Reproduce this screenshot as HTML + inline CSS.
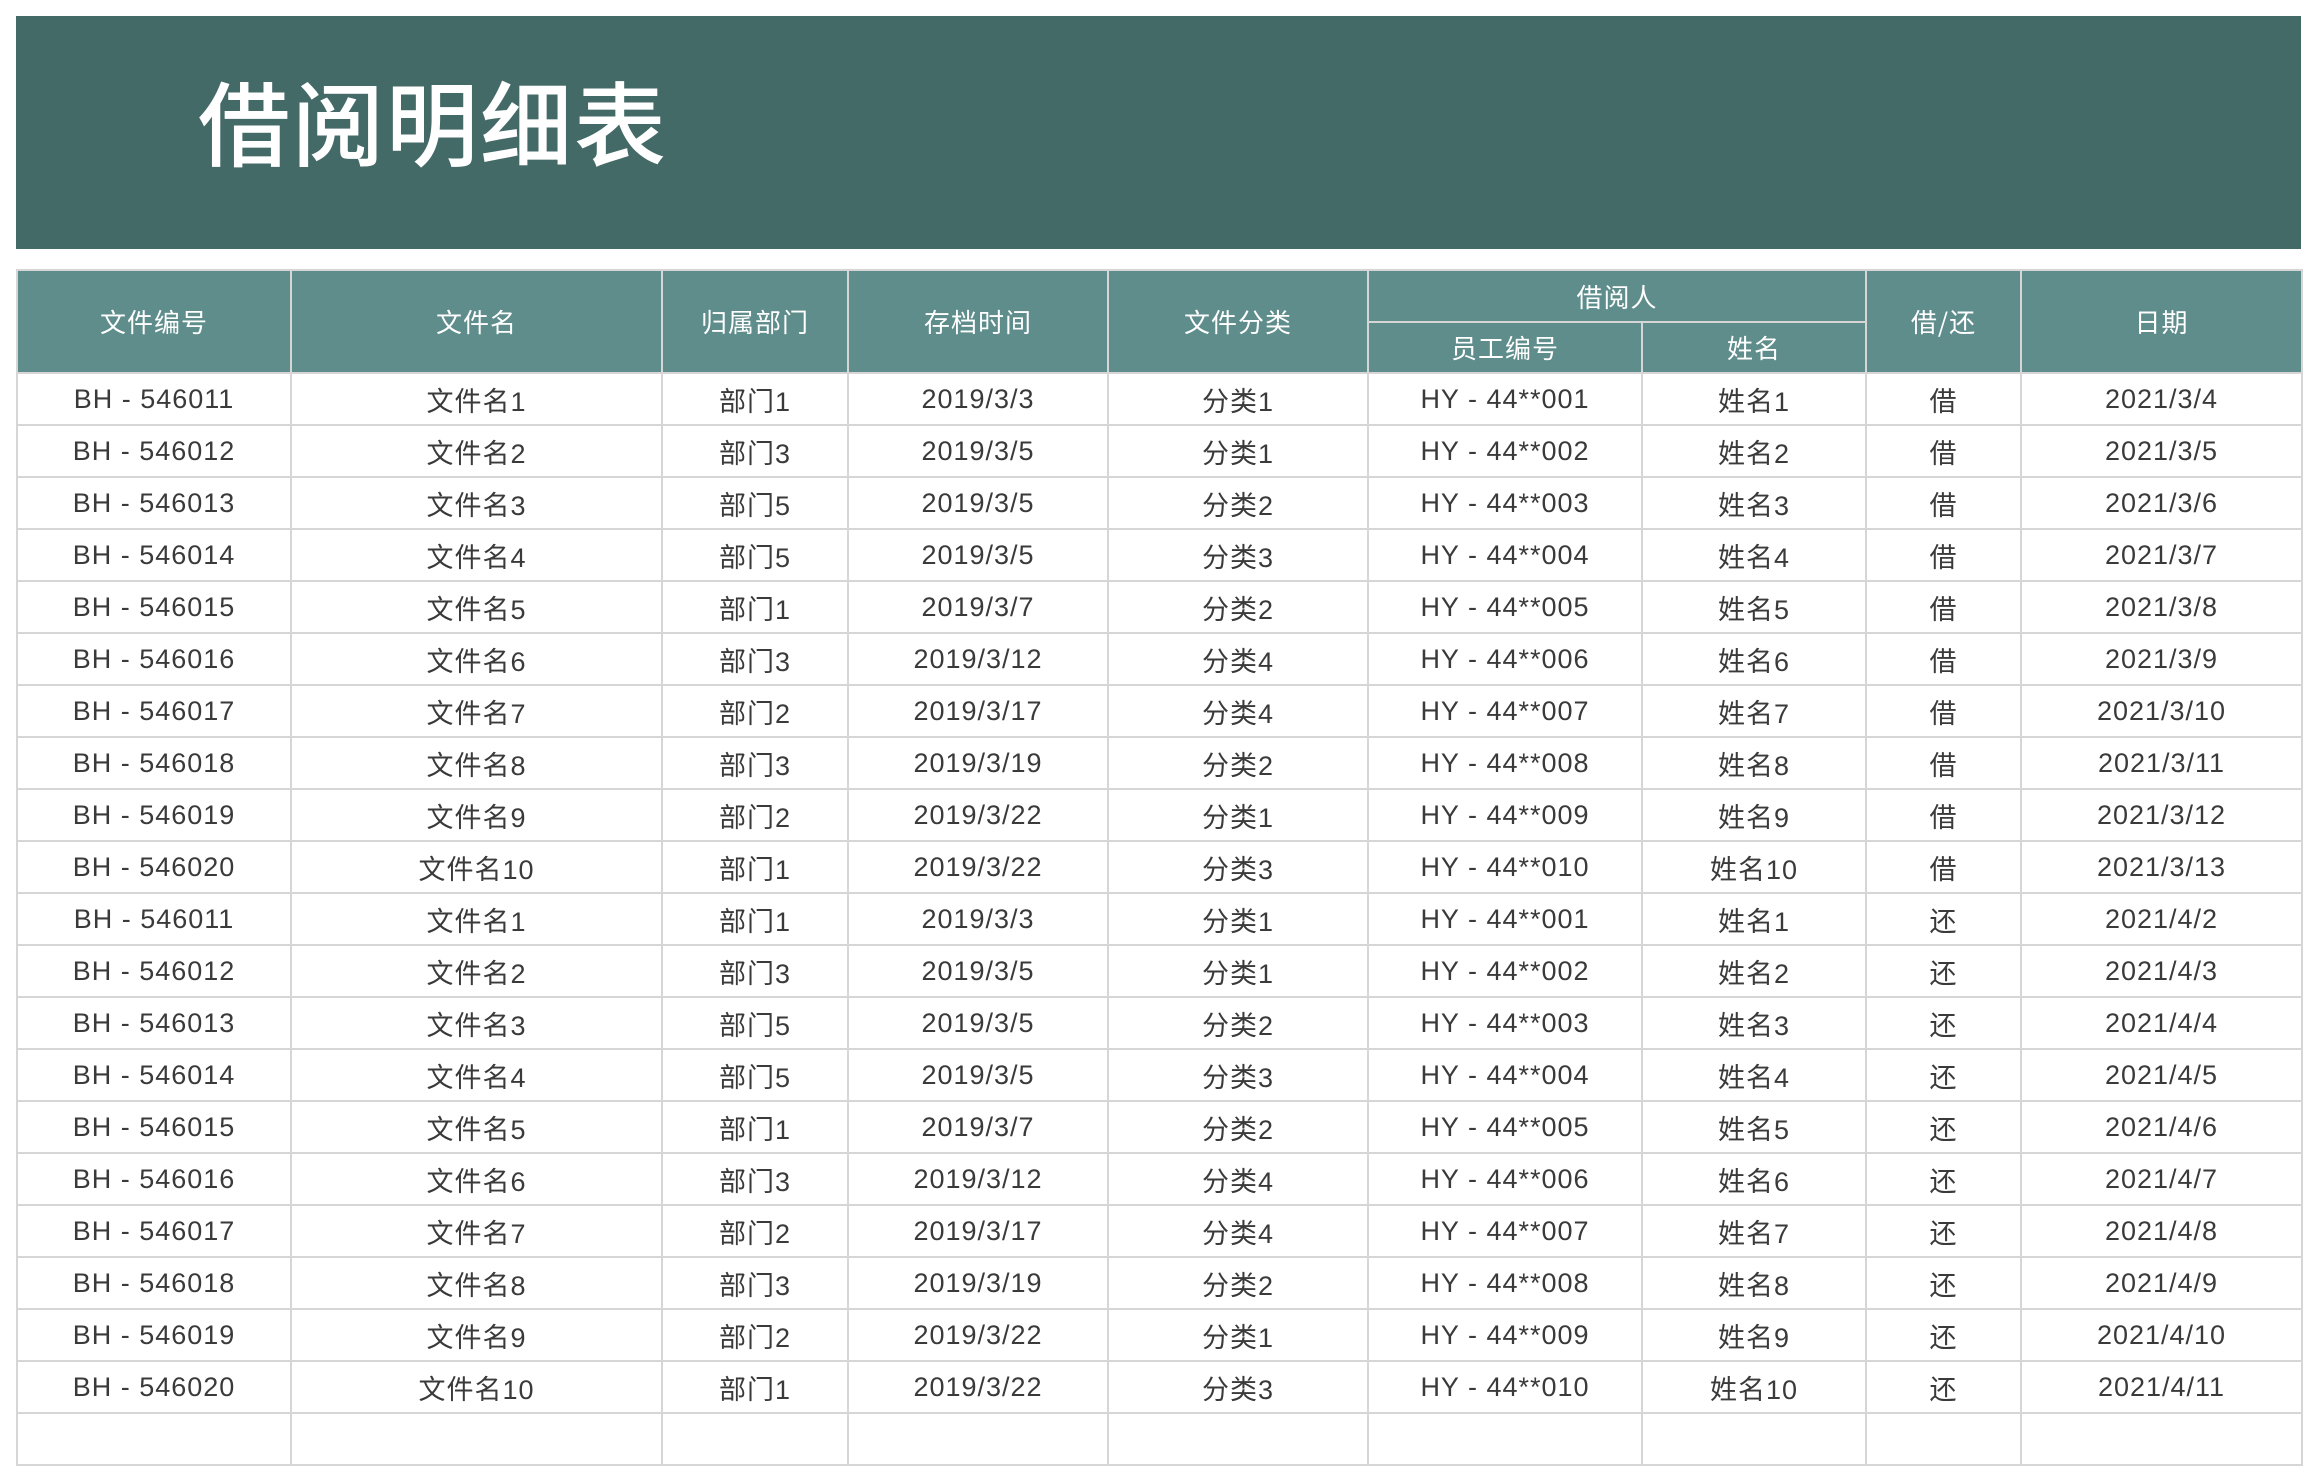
<!DOCTYPE html>
<html><head><meta charset="utf-8"><style>
html,body{margin:0;padding:0;background:#fff;width:2318px;height:1481px;overflow:hidden}
.banner{position:absolute;left:16px;top:16px;width:2285px;height:233px;background:#446a68}
.title{position:absolute;left:198px;top:60px;font-family:"Noto Sans CJK SC",sans-serif;font-size:92px;font-weight:500;color:#fff;line-height:120px;letter-spacing:2px}
table{position:absolute;left:16px;top:269px;border-collapse:collapse;table-layout:fixed;width:2285px;font-family:"Liberation Sans","Noto Sans CJK SC",sans-serif}
td,th{border:2px solid #d6d6d6;text-align:center;padding:0;overflow:hidden;white-space:nowrap}
th{background:#5e8d8b;color:#fff;font-weight:normal;font-size:26px;font-family:"Noto Sans CJK SC",sans-serif;letter-spacing:1px}
td{height:50px;font-size:27px;color:#3a3a3a;letter-spacing:1px}
</style></head><body>
<div class="banner"></div>
<div class="title">借阅明细表</div>
<table>
<colgroup><col style="width:274px"><col style="width:371px"><col style="width:186px"><col style="width:260px"><col style="width:260px"><col style="width:274px"><col style="width:224px"><col style="width:155px"><col style="width:281px"></colgroup>
<tr style="height:52px"><th rowspan="2">文件编号</th><th rowspan="2">文件名</th><th rowspan="2">归属部门</th><th rowspan="2">存档时间</th><th rowspan="2">文件分类</th><th colspan="2">借阅人</th><th rowspan="2">借/还</th><th rowspan="2">日期</th></tr>
<tr style="height:51px"><th>员工编号</th><th>姓名</th></tr>
<tr><td>BH - 546011</td><td>文件名1</td><td>部门1</td><td>2019/3/3</td><td>分类1</td><td>HY - 44**001</td><td>姓名1</td><td>借</td><td>2021/3/4</td></tr>
<tr><td>BH - 546012</td><td>文件名2</td><td>部门3</td><td>2019/3/5</td><td>分类1</td><td>HY - 44**002</td><td>姓名2</td><td>借</td><td>2021/3/5</td></tr>
<tr><td>BH - 546013</td><td>文件名3</td><td>部门5</td><td>2019/3/5</td><td>分类2</td><td>HY - 44**003</td><td>姓名3</td><td>借</td><td>2021/3/6</td></tr>
<tr><td>BH - 546014</td><td>文件名4</td><td>部门5</td><td>2019/3/5</td><td>分类3</td><td>HY - 44**004</td><td>姓名4</td><td>借</td><td>2021/3/7</td></tr>
<tr><td>BH - 546015</td><td>文件名5</td><td>部门1</td><td>2019/3/7</td><td>分类2</td><td>HY - 44**005</td><td>姓名5</td><td>借</td><td>2021/3/8</td></tr>
<tr><td>BH - 546016</td><td>文件名6</td><td>部门3</td><td>2019/3/12</td><td>分类4</td><td>HY - 44**006</td><td>姓名6</td><td>借</td><td>2021/3/9</td></tr>
<tr><td>BH - 546017</td><td>文件名7</td><td>部门2</td><td>2019/3/17</td><td>分类4</td><td>HY - 44**007</td><td>姓名7</td><td>借</td><td>2021/3/10</td></tr>
<tr><td>BH - 546018</td><td>文件名8</td><td>部门3</td><td>2019/3/19</td><td>分类2</td><td>HY - 44**008</td><td>姓名8</td><td>借</td><td>2021/3/11</td></tr>
<tr><td>BH - 546019</td><td>文件名9</td><td>部门2</td><td>2019/3/22</td><td>分类1</td><td>HY - 44**009</td><td>姓名9</td><td>借</td><td>2021/3/12</td></tr>
<tr><td>BH - 546020</td><td>文件名10</td><td>部门1</td><td>2019/3/22</td><td>分类3</td><td>HY - 44**010</td><td>姓名10</td><td>借</td><td>2021/3/13</td></tr>
<tr><td>BH - 546011</td><td>文件名1</td><td>部门1</td><td>2019/3/3</td><td>分类1</td><td>HY - 44**001</td><td>姓名1</td><td>还</td><td>2021/4/2</td></tr>
<tr><td>BH - 546012</td><td>文件名2</td><td>部门3</td><td>2019/3/5</td><td>分类1</td><td>HY - 44**002</td><td>姓名2</td><td>还</td><td>2021/4/3</td></tr>
<tr><td>BH - 546013</td><td>文件名3</td><td>部门5</td><td>2019/3/5</td><td>分类2</td><td>HY - 44**003</td><td>姓名3</td><td>还</td><td>2021/4/4</td></tr>
<tr><td>BH - 546014</td><td>文件名4</td><td>部门5</td><td>2019/3/5</td><td>分类3</td><td>HY - 44**004</td><td>姓名4</td><td>还</td><td>2021/4/5</td></tr>
<tr><td>BH - 546015</td><td>文件名5</td><td>部门1</td><td>2019/3/7</td><td>分类2</td><td>HY - 44**005</td><td>姓名5</td><td>还</td><td>2021/4/6</td></tr>
<tr><td>BH - 546016</td><td>文件名6</td><td>部门3</td><td>2019/3/12</td><td>分类4</td><td>HY - 44**006</td><td>姓名6</td><td>还</td><td>2021/4/7</td></tr>
<tr><td>BH - 546017</td><td>文件名7</td><td>部门2</td><td>2019/3/17</td><td>分类4</td><td>HY - 44**007</td><td>姓名7</td><td>还</td><td>2021/4/8</td></tr>
<tr><td>BH - 546018</td><td>文件名8</td><td>部门3</td><td>2019/3/19</td><td>分类2</td><td>HY - 44**008</td><td>姓名8</td><td>还</td><td>2021/4/9</td></tr>
<tr><td>BH - 546019</td><td>文件名9</td><td>部门2</td><td>2019/3/22</td><td>分类1</td><td>HY - 44**009</td><td>姓名9</td><td>还</td><td>2021/4/10</td></tr>
<tr><td>BH - 546020</td><td>文件名10</td><td>部门1</td><td>2019/3/22</td><td>分类3</td><td>HY - 44**010</td><td>姓名10</td><td>还</td><td>2021/4/11</td></tr>
<tr><td></td><td></td><td></td><td></td><td></td><td></td><td></td><td></td><td></td></tr>
</table>
</body></html>
